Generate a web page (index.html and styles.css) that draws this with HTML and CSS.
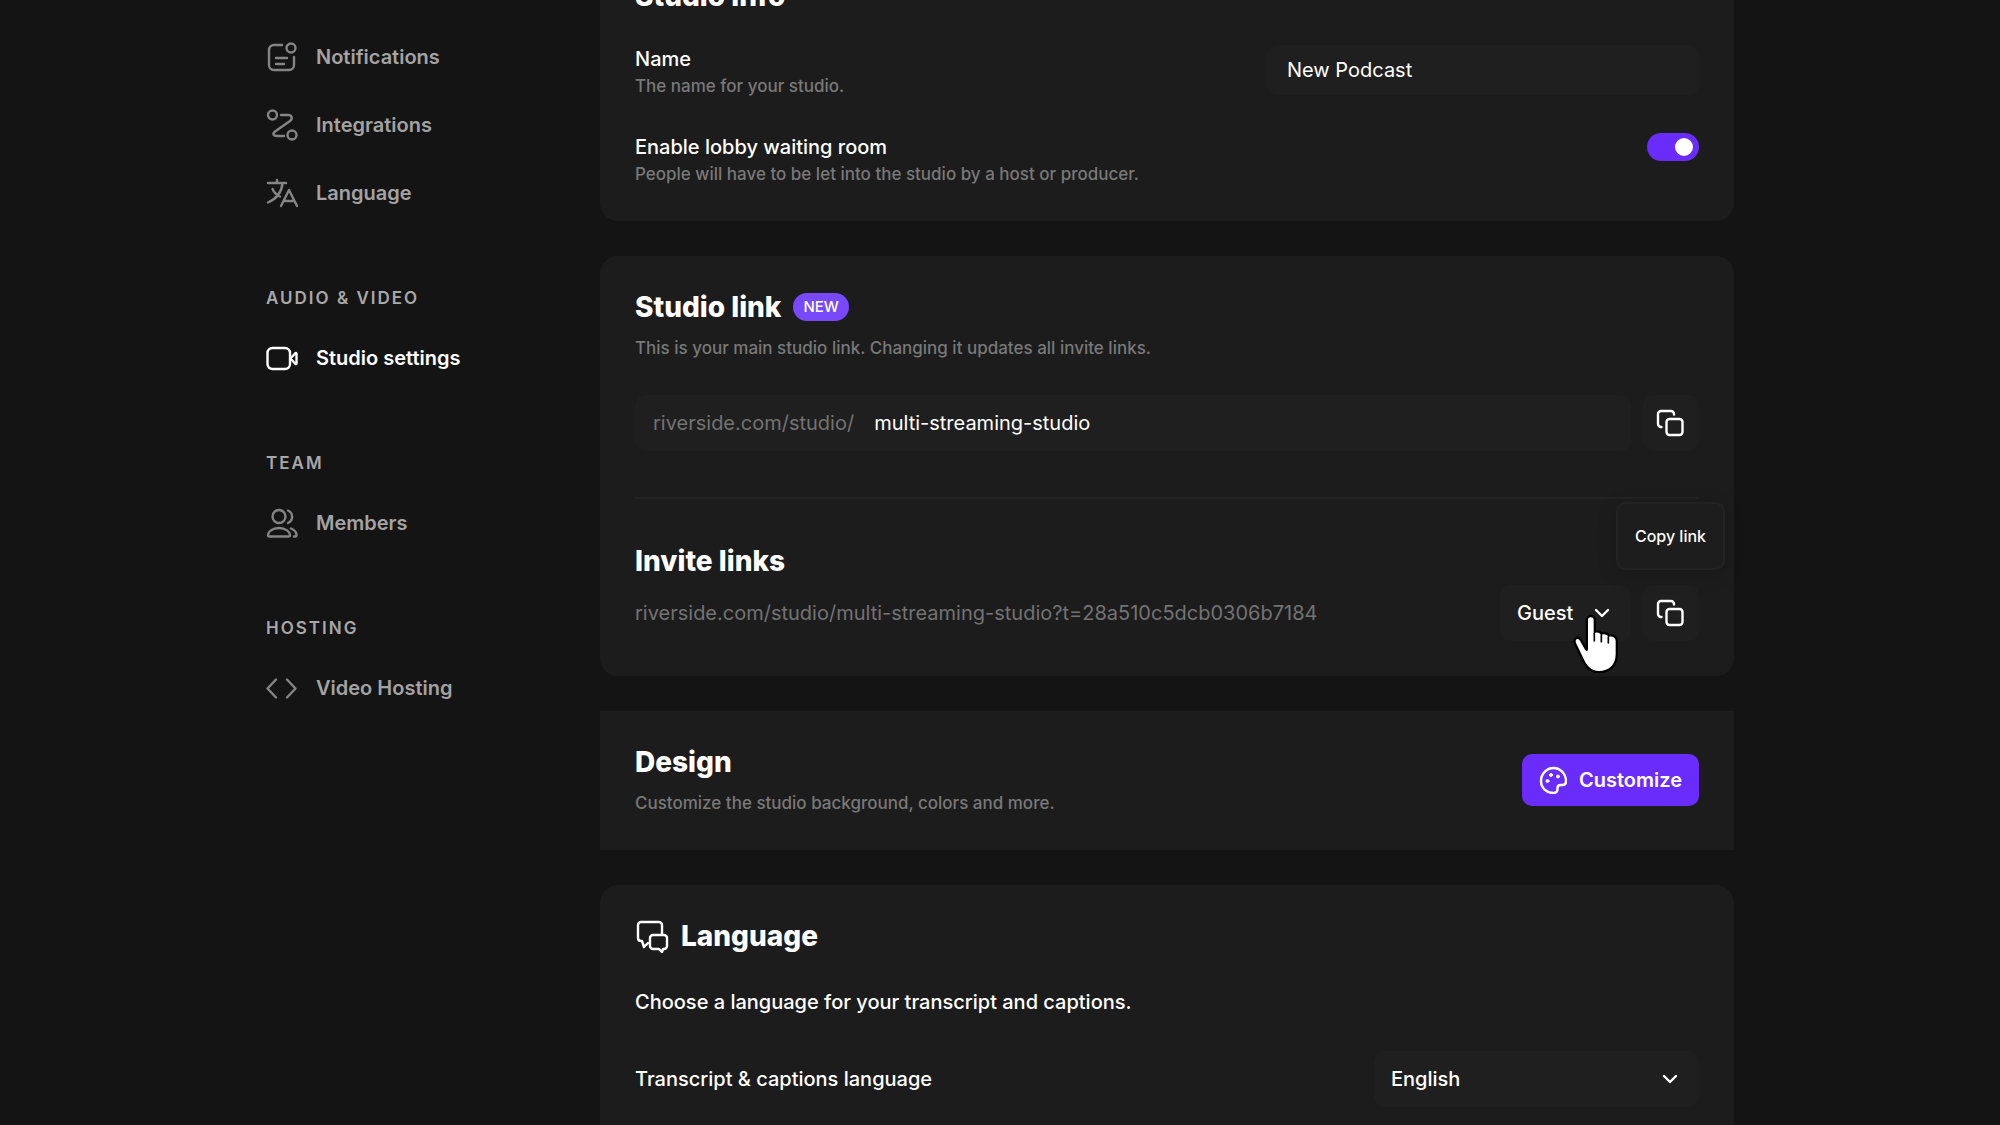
FILE: index.html
```html
<!DOCTYPE html>
<html lang="en">
<head>
    <meta charset="UTF-8">
    <meta name="viewport" content="width=device-width, initial-scale=1.0">
    <title>Studio settings</title>
    <link rel="stylesheet" href="styles.css">
</head>
<body>
    <div class="page">
        <nav class="sidebar">
            <div class="nav-group">
                <a class="nav-item" href="#notifications">
                    <svg class="icon" viewBox="0 0 32 32"><path d="M16 4H8a5 5 0 0 0-5 5v15a5 5 0 0 0 5 5h15a5 5 0 0 0 5-5v-8M10 17h11M10 23h8"/><circle cx="25" cy="7" r="4.5"/></svg>
                    Notifications
                </a>
                <a class="nav-item" href="#integrations">
                    <svg class="icon" viewBox="0 0 32 32"><circle cx="6.5" cy="6" r="4.5"/><circle cx="26" cy="26" r="4.5"/><path d="M15 6h7c4 0 5 3.5 2 6L9 22.5C6 25 7.5 27 11 27h7"/></svg>
                    Integrations
                </a>
                <a class="nav-item" href="#language">
                    <svg class="icon" viewBox="0 0 32 32"><path d="M2 6h18M11 3v3M16.5 6.5C15.5 16 10 22 2 25.5M6.5 12c1.5 3.5 4 6 7.5 7.5M15 29l8-16 8 16M18 24h10.5"/></svg>
                    Language
                </a>
            </div>
            <div class="nav-group">
                <h3>AUDIO &amp; VIDEO</h3>
                <a class="nav-item active" href="#studio-settings">
                    <svg class="icon" viewBox="0 0 32 32"><rect x="1.5" y="6" width="22.5" height="21" rx="5"/><path d="M24.500 16.5l5-5.5c.5-.3 1 0 1 .5v10c0 .5-.5.8-1 .5z"/></svg>
                    Studio settings
                </a>
            </div>
            <div class="nav-group">
                <h3>TEAM</h3>
                <a class="nav-item" href="#members">
                    <svg class="icon" viewBox="0 0 32 32"><circle cx="13" cy="9.5" r="6.5"/><path d="M13 21C6 21 2 25 2 28c0 1 .5 1.5 1.5 1.5h19c1 0 1.5-.5 1.5-1.5 0-3-4-7-11-7zM22 3.5c5.5 2.5 5.500 10 0 12.5M25 21.5c3.5 1.500 5.5 4 5.5 6.5 0 1-.5 1.5-1.5 1.5H28"/></svg>
                    Members
                </a>
            </div>
            <div class="nav-group">
                <h3>HOSTING</h3>
                <a class="nav-item" href="#video-hosting">
                    <svg class="icon" viewBox="0 0 32 32"><path d="M10 7.5l-8.500 9 8.500 9M21 7.500l8.500 9-8.500 9"/></svg>
                    Video Hosting
                </a>
            </div>
        </nav>

        <main class="content">
            <section class="card first">
                <h2>Studio info</h2>
                <div class="row">
                    <div>
                        <label class="label" for="name">Name</label>
                        <p class="hint">The name for your studio.</p>
                    </div>
                    <input type="text" class="field name-field" id="name" value="New Podcast">
                </div>
                <div class="row">
                    <div>
                        <label class="label" for="lobby">Enable lobby waiting room</label>
                        <p class="hint">People will have to be let into the studio by a host or producer.</p>
                    </div>
                    <input type="checkbox" class="toggle" id="lobby" checked>
                </div>
            </section>

            <section class="card">
                <div class="heading">
                    <h2>Studio link</h2>
                    <span class="badge">NEW</span>
                </div>
                <p class="hint spaced">This is your main studio link. Changing it updates all invite links.</p>
                <div class="link-row">
                    <div class="field link-field">
                        <label for="slug">riverside.com/studio/</label>
                        <input type="text" id="slug" value="multi-streaming-studio">
                    </div>
                    <button class="field copy" aria-label="Copy studio link">
                        <svg class="icon" viewBox="0 0 32 32"><path d="M19 7.5V7a3 3 0 0 0-3-3H6a3 3 0 0 0-3 3v10a3 3 0 0 0 3 3h.5"/><rect x="11.5" y="12" width="16" height="16" rx="3"/></svg>
                    </button>
                </div>
                <hr>
                <h2>Invite links</h2>
                <div class="invite-row">
                    <span class="url">riverside.com/studio/multi-streaming-studio?t=28a510c5dcb0306b7184</span>
                    <div class="select guest">
                        <select class="field" aria-label="Invite role">
                            <option>Guest</option>
                        </select>
                        <svg class="chevron" viewBox="0 0 16 16"><path d="M2 5l6 6 6-6"/></svg>
                        <svg class="cursor" viewBox="0 0 141 180">
                            <path class="hand" d="M45 15A8.5 8.5 0 0 1 62 15V56C70 50 81 52 84 60C92 55 103 58 106 66C116 62 128 66 128 78V118C128 150 108 168 78 168C54 168 42 152 34 136L9 84C5 74 14 68 20 76L37 106Q45 112 45 102Z"/>
                            <path class="fingers" d="M64 56v22M85 60v20M106 66v18"/>
                        </svg>
                    </div>
                    <div class="copy-wrap">
                        <button class="field copy" aria-label="Copy invite link">
                            <svg class="icon" viewBox="0 0 32 32"><path d="M19 7.5V7a3 3 0 0 0-3-3H6a3 3 0 0 0-3 3v10a3 3 0 0 0 3 3h.5"/><rect x="11.5" y="12" width="16" height="16" rx="3"/></svg>
                        </button>
                        <div class="tooltip">Copy link</div>
                    </div>
                </div>
            </section>

            <section class="card design">
                <div>
                    <h2>Design</h2>
                    <p class="hint spaced">Customize the studio background, colors and more.</p>
                </div>
                <button class="customize">
                    <svg viewBox="0 0 28 28"><path d="M14.5 2C7.5 2 2 8 2 15s5.5 12 12.5 12c3 0 4-2 4-4.5v-.5c0-2 1-3 3-3h2c2.5 0 3.5-1.5 3.5-4C27 8 21.5 2 14.5 2z"/><circle cx="12" cy="9" r="1.5"/><circle cx="19" cy="10.5" r="1.5"/><circle cx="8.5" cy="15" r="1.5"/></svg>
                    Customize
                </button>
            </section>

            <section class="card">
                <div class="heading">
                    <svg class="chat" viewBox="0 0 34 34"><path d="M27 15V6a3 3 0 0 0-3-3H6a3 3 0 0 0-3 3v13c0 2 1 3 3 3h1l2 6 4-4"/><path d="M18 16h11a3 3 0 0 1 3 3v8a3 3 0 0 1-3 3h-1l-1 3-3-3h-6a3 3 0 0 1-3-3v-8a3 3 0 0 1 3-3z"/></svg>
                    <h2>Language</h2>
                </div>
                <p class="label intro">Choose a language for your transcript and captions.</p>
                <div class="row center">
                    <label class="label" for="lang">Transcript &amp; captions language</label>
                    <div class="select lang">
                        <select class="field" id="lang">
                            <option>English</option>
                        </select>
                        <svg class="chevron" viewBox="0 0 16 16"><path d="M2 5l6 6 6-6"/></svg>
                    </div>
                </div>
            </section>
        </main>
    </div>
</body>
</html>
```
FILE: styles.css
```css
* {
    box-sizing: border-box;
    margin: 0;
    padding: 0;
}
body {
    height: 100vh;
    overflow: hidden;
    background-color: #141414;
    color: #fff;
    font-family: Inter, "Liberation Sans", sans-serif;
    font-size: 20px;
    line-height: 28px;
}
.page {
    display: grid;
    grid-template-columns: 334px 1fr;
    max-width: 1468px;
    margin: 0 auto;
}
svg {
    display: block;
    flex-shrink: 0;
    fill: none;
    stroke: currentColor;
    stroke-width: 2.4;
    stroke-linecap: round;
    stroke-linejoin: round;
}
.icon {
    width: 32px;
    height: 32px;
}
input, select, button {
    font: inherit;
    color: inherit;
    border: none;
    outline: none;
}

/* sidebar */
.sidebar {
    padding-top: 39px;
}
.nav-group {
    display: flex;
    flex-direction: column;
    gap: 32px;
    margin-bottom: 75px;
}
.nav-group h3 {
    font-size: 17px;
    font-weight: 600;
    line-height: 24px;
    letter-spacing: 2px;
    color: #a8a8a8;
    margin-bottom: -2px;
}
.nav-item {
    display: flex;
    align-items: center;
    gap: 18px;
    height: 36px;
    color: #a3a3a3;
    font-weight: 600;
    text-decoration: none;
}
.nav-item .icon {
    color: #858585;
}
.nav-item.active, .nav-item.active .icon {
    color: #fff;
}

/* cards */
.content {
    display: flex;
    flex-direction: column;
    gap: 35px;
}
.card {
    padding: 33px 35px 35px;
    background-color: #1c1c1c;
    border-radius: 18px;
}
.card.first {
    margin-top: -55px;
}
h2 {
    font-size: 28px;
    font-weight: 800;
    line-height: 36px;
}
.heading {
    display: flex;
    align-items: center;
    gap: 12px;
}
.row {
    display: flex;
    justify-content: space-between;
    margin-top: 35px;
}
.row.center {
    align-items: center;
}
.first h2 {
    margin-bottom: -4px;
}
.label {
    display: block;
    font-weight: 500;
}
.hint {
    margin-top: 1px;
    font-size: 17px;
    font-weight: 500;
    line-height: 24px;
    color: #797979;
}
.hint.spaced {
    margin-top: 11px;
}
.field {
    height: 56px;
    background-color: #1f1f1f;
    border-radius: 10px;
}
.name-field {
    width: 432px;
    height: 50px;
    padding: 0 20px;
}
.toggle {
    appearance: none;
    width: 52px;
    height: 28px;
    padding: 5px 6px;
    background-color: #6a2cfa;
    border-radius: 14px;
}
.toggle::before {
    content: "";
    display: block;
    width: 18px;
    height: 18px;
    margin-left: auto;
    background-color: #fff;
    border-radius: 50%;
}
.badge {
    padding: 0 10px;
    background-color: #7848fb;
    border-radius: 14px;
    font-size: 15px;
    font-weight: 500;
}

/* links */
.link-row {
    display: flex;
    gap: 12px;
    margin-top: 35px;
}
.link-field {
    display: flex;
    flex: 1;
    align-items: center;
    gap: 20px;
    padding: 0 18px;
    color: #737373;
}
.link-field input {
    flex: 1;
    background: none;
    color: #fff;
}
.copy {
    display: flex;
    align-items: center;
    justify-content: center;
    width: 56px;
}
hr {
    height: 2px;
    margin: 46px 0 44px;
    border: none;
    background-color: #242424;
}
.invite-row {
    display: flex;
    align-items: center;
    gap: 12px;
    margin-top: 6px;
}
.url {
    flex: 1;
    color: #737373;
}
.select {
    position: relative;
}
.select select {
    appearance: none;
    width: 100%;
    padding: 0 17px;
    font-weight: 500;
}
.guest {
    width: 131px;
}
.lang {
    width: 325px;
}
.chevron {
    position: absolute;
    top: 20px;
    right: 21px;
    width: 16px;
    height: 16px;
}
.cursor {
    position: absolute;
    top: 30px;
    left: 73px;
    width: 47px;
    height: 60px;
    overflow: visible;
}
.hand {
    fill: #fff;
    stroke: #000;
    stroke-width: 14;
    paint-order: stroke;
}
.fingers {
    stroke: #000;
    stroke-width: 5;
}
.copy-wrap {
    position: relative;
}
.tooltip {
    position: absolute;
    right: -26px;
    bottom: 71px;
    padding: 18px 17px;
    background-color: #1d1d1d;
    border: 2px solid #232323;
    border-radius: 10px;
    box-shadow: 0 4px 20px rgba(0, 0, 0, 0.15);
    font-size: 16px;
    font-weight: 500;
    white-space: nowrap;
}

/* design */
.design {
    display: flex;
    align-items: center;
    justify-content: space-between;
    border-radius: 0;
}
.customize {
    display: flex;
    align-items: center;
    gap: 12px;
    height: 52px;
    padding: 0 17px;
    background-color: #6a2cfa;
    border-radius: 10px;
    font-weight: 600;
}
.customize svg {
    width: 28px;
    height: 28px;
}
.customize circle {
    fill: currentColor;
    stroke-width: 1;
}

/* language */
.chat {
    width: 34px;
    height: 34px;
}
.intro {
    margin-top: 34px;
}
```
